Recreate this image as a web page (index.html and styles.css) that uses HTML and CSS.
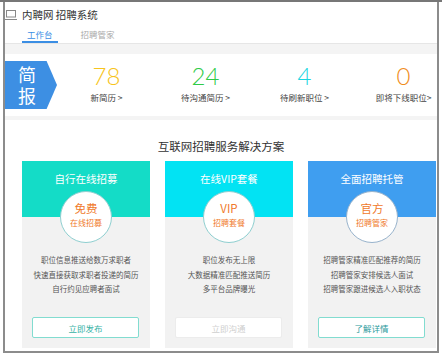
FILE: index.html
```html
<!DOCTYPE html>
<html lang="zh-CN">
<head>
  <meta charset="UTF-8">
  <meta name="viewport" content="width=device-width, initial-scale=1.0">
  <title>内聘网 招聘系统</title>
  <link rel="stylesheet" href="styles.css">
</head>
<body>
  <div class="topline"></div>
  <div class="frame">
    <div class="header">
      <div class="brand">
        <svg class="brand-icon" width="12" height="10" viewBox="0 0 12 10">
          <rect x="1.5" y="0.5" width="9" height="6.5" fill="none" stroke="#888" stroke-width="1"/>
          <path d="M0 9.5h12" stroke="#888" stroke-width="1"/>
        </svg>
        <span>内聘网 招聘系统</span>
      </div>
      <div class="tabs">
        <a class="tab active">工作台</a>
        <a class="tab">招聘管家</a>
      </div>
    </div>

    <div class="spacer"></div>

    <div class="stats">
      <div class="brief">
        <span class="brief-text">简报</span>
      </div>
      <div class="stat">
        <div class="num yellow">78</div>
        <div class="label">新简历 &gt;</div>
      </div>
      <div class="stat">
        <div class="num green">24</div>
        <div class="label">待沟通简历 &gt;</div>
      </div>
      <div class="stat">
        <div class="num cyan">4</div>
        <div class="label">待刷新职位 &gt;</div>
      </div>
      <div class="stat">
        <div class="num orange">0</div>
        <div class="label">即将下线职位&gt;</div>
      </div>
    </div>

    <div class="spacer small"></div>

    <div class="main">
      <h2 class="main-title">互联网招聘服务解决方案</h2>
      <div class="cards">
        <div class="card">
          <div class="card-head teal">自行在线招募</div>
          <div class="circle teal-ring">
            <b>免费</b>
            <small>在线招募</small>
          </div>
          <div class="card-desc">
            <p>职位信息推送给数万求职者</p>
            <p>快速直接获取求职者投递的简历</p>
            <p>自行约见应聘者面试</p>
          </div>
          <button class="card-btn">立即发布</button>
        </div>

        <div class="card">
          <div class="card-head sky">在线VIP套餐</div>
          <div class="circle teal-ring">
            <b>VIP</b>
            <small>招聘套餐</small>
          </div>
          <div class="card-desc">
            <p>职位发布无上限</p>
            <p>大数据精准匹配推送简历</p>
            <p>多平台品牌曝光</p>
          </div>
          <button class="card-btn disabled">立即沟通</button>
        </div>

        <div class="card">
          <div class="card-head blue">全面招聘托管</div>
          <div class="circle blue-ring">
            <b>官方</b>
            <small>招聘管家</small>
          </div>
          <div class="card-desc">
            <p>招聘管家精准匹配推荐的简历</p>
            <p>招聘管家安排候选人面试</p>
            <p>招聘管家跟进候选人入职状态</p>
          </div>
          <button class="card-btn dark">了解详情</button>
        </div>
      </div>
    </div>
  </div>
</body>
</html>
```

FILE: styles.css
```css
body {
  margin: 0;
  background: #fff;
  font-family: "Noto Sans CJK SC", "Liberation Sans", sans-serif;
  color: #333;
  overflow: hidden;
}

.topline {
  height: 2px;
  background: #777;
}

.frame {
  box-sizing: border-box;
  margin-left: 3px;
  width: 436px;
  height: 351px;
  border-left: 2px solid #8c8c8c;
  border-right: 2px solid #8c8c8c;
  border-bottom: 2px solid #8c8c8c;
  background: #f4f4f4;
  overflow: hidden;
}

/* header */
.header {
  height: 41px;
  background: #fff;
  border-bottom: 1px solid #e6e6e6;
}

.brand {
  display: flex;
  align-items: center;
  gap: 5px;
  height: 25px;
  font-size: 10.5px;
  color: #333;
}

.brand-icon {
  display: block;
}

.tabs {
  display: flex;
  gap: 18px;
  padding-left: 17px;
}

.tab {
  display: block;
  padding: 0 5px;
  height: 14px;
  line-height: 14px;
  font-size: 8.5px;
  color: #aaa;
  border-bottom: 2px solid transparent;
}

.tab.active {
  color: #3b8ee4;
  border-bottom-color: #3b8ee4;
}

.spacer {
  height: 10px;
}

.spacer.small {
  height: 4px;
}

/* stats */
.stats {
  display: flex;
  align-items: center;
  height: 62px;
  background: #fff;
}

.brief {
  flex: 0 0 52px;
  height: 48px;
  box-sizing: border-box;
  padding-right: 8px;
  display: flex;
  align-items: center;
  justify-content: center;
  background: #3d8fe3;
  color: #fff;
  clip-path: polygon(0 0, 80% 0, 100% 50%, 80% 100%, 0 100%);
}

.brief-text {
  writing-mode: vertical-rl;
  font-size: 18px;
  line-height: 20px;
  letter-spacing: 3px;
  margin-bottom: -3px;
}

.stat {
  flex: 0 0 99px;
  margin-bottom: 6px;
  text-align: center;
}

.num {
  font-family: Lato, "Liberation Sans", sans-serif;
  font-size: 24px;
  line-height: 30px;
  font-weight: 300;
}

.label {
  font-size: 8.5px;
  line-height: 12px;
  color: #444;
}

.yellow { color: #f7c41d; }
.green { color: #2fcb48; }
.cyan { color: #1ad6df; }
.orange { color: #f08d1c; }

/* main */
.main {
  height: 231px;
  background: #fff;
  padding: 18px 0 0 17px;
}

.main-title {
  margin: 0 0 6px;
  padding-right: 17px;
  text-align: center;
  font-size: 11.5px;
  line-height: 17px;
  font-weight: 400;
  color: #333;
}

.cards {
  display: flex;
  gap: 15px;
}

.card {
  width: 128px;
  height: 187px;
  display: flex;
  flex-direction: column;
  background: #f2f2f2;
}

.card-head {
  height: 56px;
  box-sizing: border-box;
  padding-top: 11px;
  text-align: center;
  font-size: 10.5px;
  line-height: 14px;
  color: #fff;
}

.card-head.teal { background: #14dcc7; }
.card-head.sky { background: #02e3f3; }
.card-head.blue { background: #3f9ef0; }

.circle {
  box-sizing: border-box;
  width: 52px;
  height: 52px;
  margin: -26px auto 0;
  padding-top: 9px;
  border-radius: 50%;
  background: #fff;
  display: flex;
  flex-direction: column;
  align-items: center;
  color: #f07a2b;
}

.teal-ring { border: 1px solid #8fcfd0; }
.blue-ring { border: 1px solid #98b3cc; }

.circle b {
  font-size: 11.5px;
  line-height: 15px;
  font-weight: 400;
}

.circle small {
  margin-top: 1px;
  font-size: 8px;
  line-height: 11px;
}

.card-desc {
  margin-top: 10px;
  text-align: center;
  font-size: 7.5px;
  line-height: 14.5px;
  color: #555;
}

.card-desc p {
  margin: 0;
}

.card-btn {
  display: block;
  margin: auto 11px 10px 10px;
  height: 21px;
  padding: 0;
  border: 1px solid #82dcd0;
  border-radius: 2px;
  background: #fff;
  font-family: inherit;
  font-size: 8.5px;
  color: #37b2a6;
  cursor: pointer;
}

.card-btn.disabled {
  border-color: #ececec;
  color: #cfcfcf;
}

.card-btn.dark {
  color: #2a9a9c;
}
```
